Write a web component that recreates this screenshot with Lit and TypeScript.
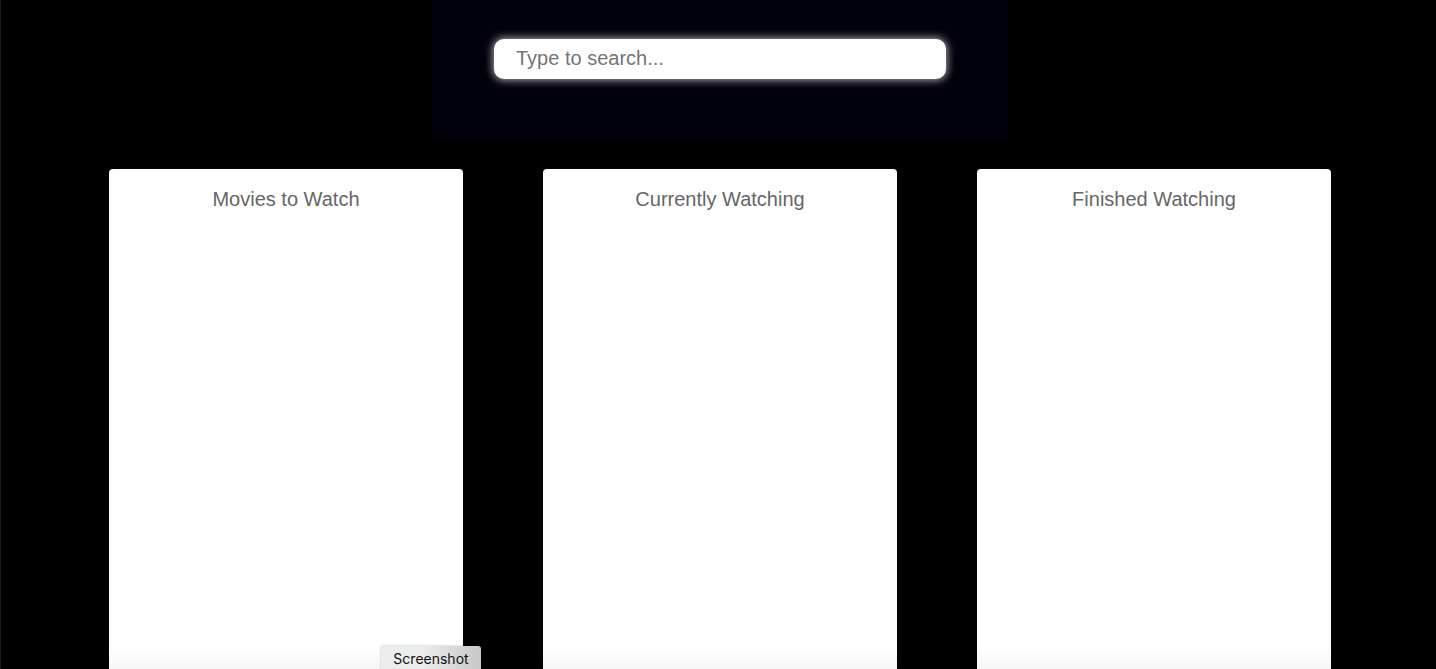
import { LitElement, html, css } from "lit";
import { customElement, state } from "lit/decorators.js";

@customElement("movie-column")
class MovieColumn extends LitElement {
  static properties = { heading: {} };
  declare heading: string;

  static styles = css`
    :host {
      display: block;
      background: #fff;
      border-radius: 4px 4px 0 0;
    }
    .title {
      margin: 0;
      padding: 16px;
      text-align: center;
      font-size: 20px;
      font-weight: 400;
      line-height: 28px;
      color: #666;
    }
  `;

  render() {
    return html`<section><h2 class="title">${this.heading}</h2><slot></slot></section>`;
  }
}

@customElement("app-root")
class AppRoot extends LitElement {
  static styles = css`
    :host {
      display: flex;
      flex-direction: column;
      box-sizing: border-box;
      height: 100vh;
      overflow: hidden;
      position: relative;
      background: #000;
      border-left: 1px solid #1c1c1c;
      padding-left: 3px;
      font-family: "Liberation Sans", Arial, Helvetica, sans-serif;
    }
    .search {
      box-sizing: border-box;
      width: 576px;
      max-width: 100%;
      margin: 0 auto;
      padding: 39px 62px 61px;
      background: #01010c;
    }
    .field {
      display: block;
      box-sizing: border-box;
      width: 100%;
      height: 40px;
      margin: 0;
      padding: 0 22px 2px;
      border: 0;
      border-radius: 10px;
      outline: none;
      background: #fff;
      box-shadow: 0 0 8px 1px #b4b0b4;
      font: 20px "Liberation Sans", Arial, Helvetica, sans-serif;
      color: #333;
    }
    .field::placeholder {
      color: #757575;
      opacity: 1;
    }
    .board {
      flex: 1;
      display: grid;
      grid-template-columns: repeat(3, 1fr);
      gap: 80px;
      padding: 29px 105px 0;
    }
    .fade {
      position: absolute;
      inset: auto 0 0;
      height: 20px;
      background: linear-gradient(transparent, rgba(0, 0, 0, 0.04));
      pointer-events: none;
    }
    .tooltip {
      position: absolute;
      left: 380px;
      bottom: 0;
      box-sizing: border-box;
      width: 100px;
      height: 23px;
      padding-top: 3px;
      border-radius: 3px 3px 0 0;
      background: linear-gradient(90deg, #eceeee 0 40%, #c8c8c8);
      box-shadow: 0 0 2px rgba(0, 0, 0, 0.35);
      text-align: center;
      font: 14px/20px Inter, sans-serif;
      color: #111;
    }
  `;

  @state() private query = "";

  private onInput(e: Event) {
    this.query = (e.target as HTMLInputElement).value;
  }

  render() {
    return html`
      <form class="search" role="search" @submit=${(e: Event) => e.preventDefault()}>
        <input
          class="field"
          type="text"
          aria-label="Type to search..."
          placeholder="Type to search..."
          .value=${this.query}
          @input=${this.onInput}
        />
      </form>
      <main class="board">
        ${["Movies to Watch", "Currently Watching", "Finished Watching"].map(
          (name) => html`<movie-column .heading=${name}></movie-column>`
        )}
      </main>
      <div class="fade"></div>
      <div class="tooltip" role="tooltip">Screenshot</div>
    `;
  }
}
